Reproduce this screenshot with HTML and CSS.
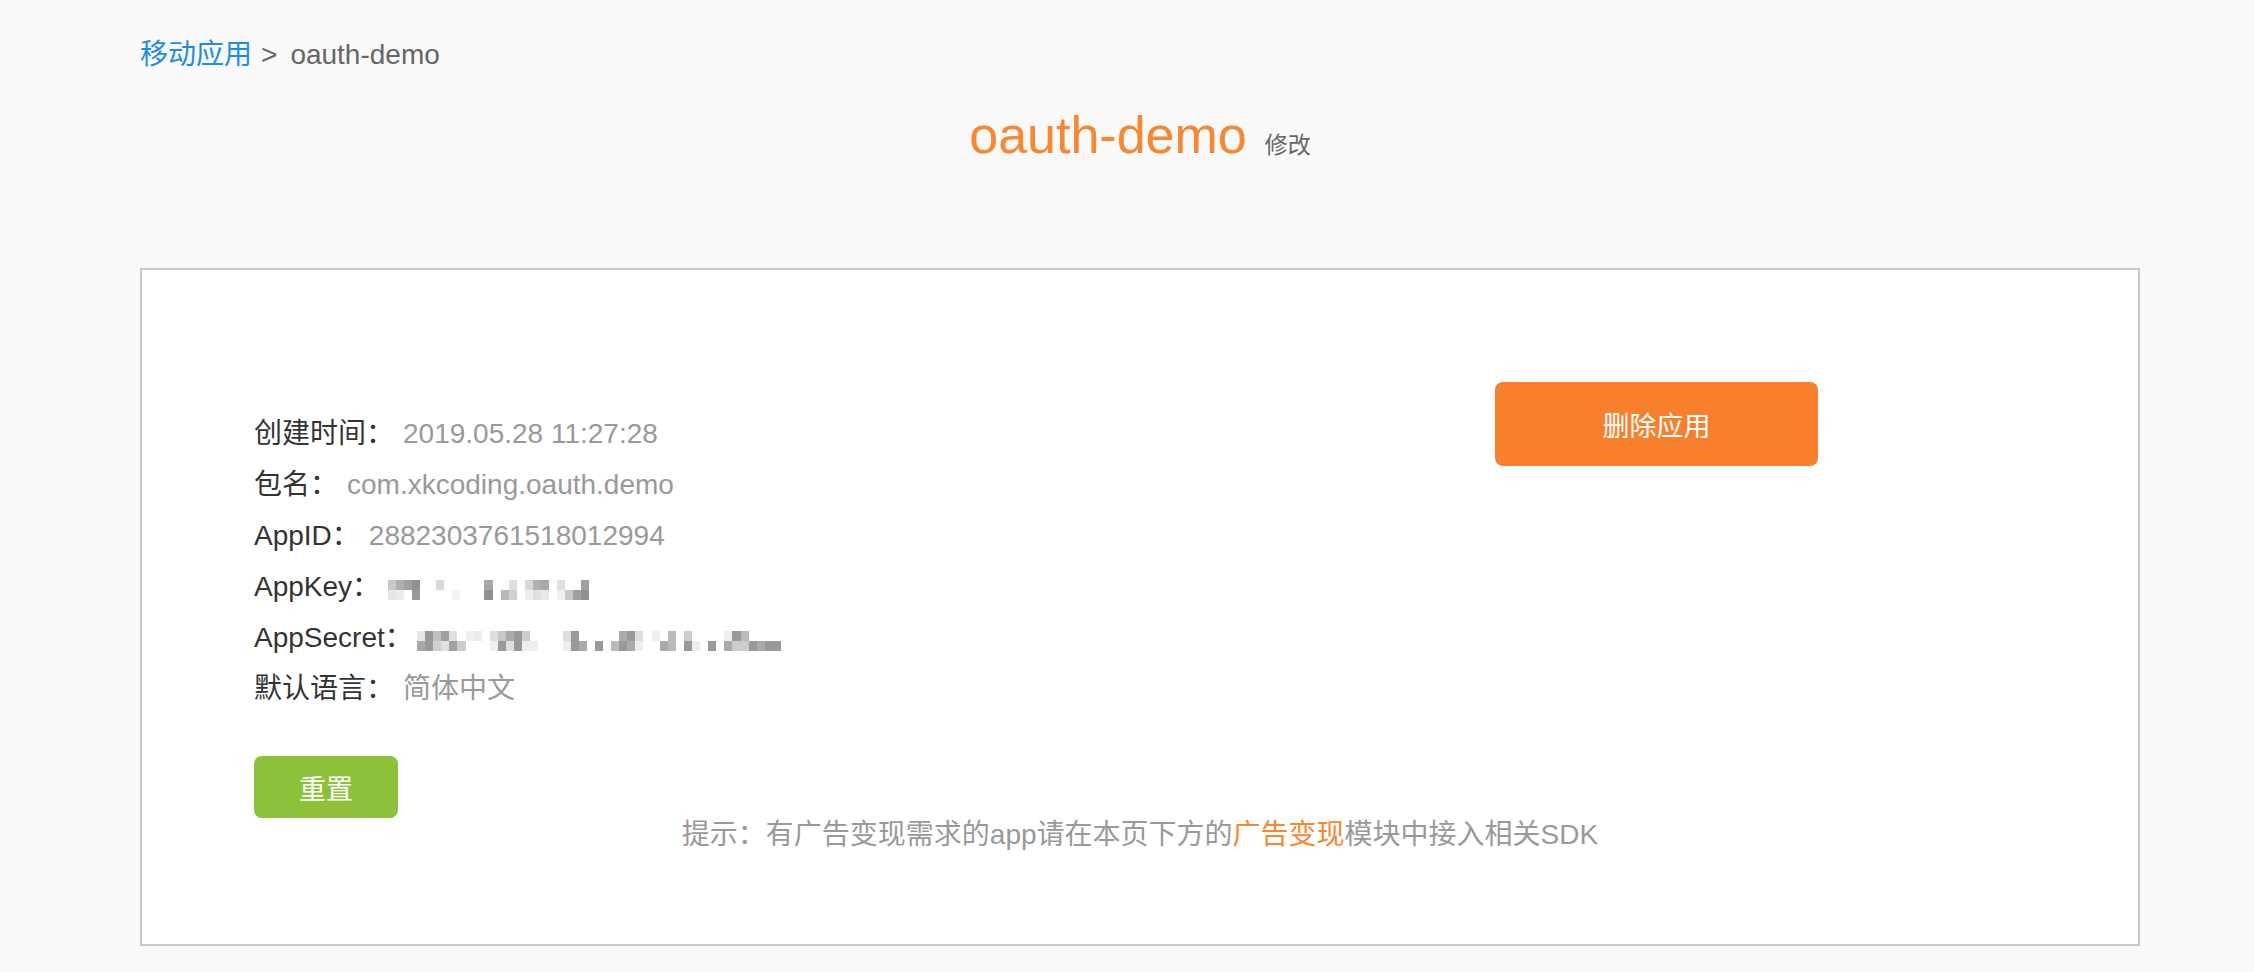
FILE: index.html
```html
<!DOCTYPE html>
<html lang="zh-CN">
<head>
<meta charset="utf-8">
<title>oauth-demo</title>
<link rel="stylesheet" href="styles.css">
</head>
<body>
<div class="page">
  <div class="crumb"><a class="crumb-link">移动应用</a><span class="crumb-sep">&gt;</span><span class="crumb-cur">oauth-demo</span></div>
  <div class="title"><span class="title-name">oauth-demo</span><a class="title-edit">修改</a></div>
  <div class="box">
    <div class="top">
      <ul class="info">
        <li><span class="lbl">创建时间：</span><span class="val">2019.05.28 11:27:28</span></li>
        <li><span class="lbl">包名：</span><span class="val">com.xkcoding.oauth.demo</span></li>
        <li><span class="lbl">AppID：</span><span class="val">2882303761518012994</span></li>
        <li><span class="lbl">AppKey：</span><span class="val">
          <svg class="mosaic key" viewBox="0 0 25 2" preserveAspectRatio="none" shape-rendering="crispEdges">
            <rect x="0" y="0" width="1" height="1" fill="#c8c8c8"/><rect x="0" y="1" width="1" height="1" fill="#e6e6e6"/>
            <rect x="1" y="0" width="1" height="1" fill="#b0b0b0"/><rect x="1" y="1" width="1" height="1" fill="#ececec"/>
            <rect x="2" y="0" width="1" height="1" fill="#a0a0a0"/>
            <rect x="3" y="0" width="1" height="1" fill="#909090"/><rect x="3" y="1" width="1" height="1" fill="#989898"/>
            <rect x="6" y="0" width="1" height="1" fill="#d8d8d8"/>
            <rect x="8" y="1" width="1" height="1" fill="#f2f2f2"/>
            <rect x="12" y="0" width="1" height="1" fill="#a8a8a8"/><rect x="12" y="1" width="1" height="1" fill="#909090"/>
            <rect x="14" y="1" width="1" height="1" fill="#b8b8b8"/>
            <rect x="15" y="0" width="1" height="1" fill="#e0e0e0"/><rect x="15" y="1" width="1" height="1" fill="#d0d0d0"/>
            <rect x="17" y="0" width="1" height="1" fill="#d8d8d8"/><rect x="17" y="1" width="1" height="1" fill="#eeeeee"/>
            <rect x="18" y="0" width="1" height="1" fill="#b0b0b0"/><rect x="18" y="1" width="1" height="1" fill="#e0e0e0"/>
            <rect x="19" y="0" width="1" height="1" fill="#a8a8a8"/><rect x="19" y="1" width="1" height="1" fill="#e8e8e8"/>
            <rect x="21" y="0" width="1" height="1" fill="#e0e0e0"/><rect x="21" y="1" width="1" height="1" fill="#f0f0f0"/>
            <rect x="22" y="1" width="1" height="1" fill="#c8c8c8"/>
            <rect x="23" y="1" width="1" height="1" fill="#a0a0a0"/>
            <rect x="24" y="0" width="1" height="1" fill="#a0a0a0"/><rect x="24" y="1" width="1" height="1" fill="#909090"/>
          </svg></span></li>
        <li><span class="lbl">AppSecret：</span><span class="val">
          <svg class="mosaic secret" viewBox="0 0 45 2" preserveAspectRatio="none" shape-rendering="crispEdges">
            <rect x="0" y="0" width="1" height="1" fill="#e8e8e8"/><rect x="0" y="1" width="1" height="1" fill="#a8a8a8"/>
            <rect x="1" y="0" width="1" height="1" fill="#999999"/><rect x="1" y="1" width="1" height="1" fill="#999999"/>
            <rect x="2" y="0" width="1" height="1" fill="#c0c0c0"/><rect x="2" y="1" width="1" height="1" fill="#d0d0d0"/>
            <rect x="3" y="0" width="1" height="1" fill="#a0a0a0"/><rect x="3" y="1" width="1" height="1" fill="#e0e0e0"/>
            <rect x="4" y="0" width="1" height="1" fill="#e0e0e0"/><rect x="4" y="1" width="1" height="1" fill="#a0a0a0"/>
            <rect x="5" y="1" width="1" height="1" fill="#cccccc"/>
            <rect x="6" y="0" width="1" height="1" fill="#f0f0f0"/>
            <rect x="7" y="0" width="1" height="1" fill="#ececec"/>
            <rect x="9" y="0" width="1" height="1" fill="#dddddd"/><rect x="9" y="1" width="1" height="1" fill="#f0f0f0"/>
            <rect x="10" y="0" width="1" height="1" fill="#c8c8c8"/><rect x="10" y="1" width="1" height="1" fill="#999999"/>
            <rect x="11" y="0" width="1" height="1" fill="#aaaaaa"/><rect x="11" y="1" width="1" height="1" fill="#e0e0e0"/>
            <rect x="12" y="0" width="1" height="1" fill="#999999"/><rect x="12" y="1" width="1" height="1" fill="#999999"/>
            <rect x="13" y="0" width="1" height="1" fill="#cccccc"/><rect x="13" y="1" width="1" height="1" fill="#eeeeee"/>
            <rect x="14" y="1" width="1" height="1" fill="#eeeeee"/>
            <rect x="18" y="0" width="1" height="1" fill="#dddddd"/><rect x="18" y="1" width="1" height="1" fill="#eeeeee"/>
            <rect x="19" y="0" width="1" height="1" fill="#999999"/><rect x="19" y="1" width="1" height="1" fill="#999999"/>
            <rect x="20" y="1" width="1" height="1" fill="#aaaaaa"/>
            <rect x="22" y="1" width="1" height="1" fill="#999999"/>
            <rect x="24" y="1" width="1" height="1" fill="#bbbbbb"/>
            <rect x="25" y="0" width="1" height="1" fill="#aaaaaa"/><rect x="25" y="1" width="1" height="1" fill="#999999"/>
            <rect x="26" y="0" width="1" height="1" fill="#999999"/><rect x="26" y="1" width="1" height="1" fill="#aaaaaa"/>
            <rect x="27" y="0" width="1" height="1" fill="#dddddd"/><rect x="27" y="1" width="1" height="1" fill="#eeeeee"/>
            <rect x="29" y="0" width="1" height="1" fill="#f0f0f0"/>
            <rect x="30" y="1" width="1" height="1" fill="#aaaaaa"/>
            <rect x="31" y="0" width="1" height="1" fill="#bbbbbb"/><rect x="31" y="1" width="1" height="1" fill="#bbbbbb"/>
            <rect x="33" y="0" width="1" height="1" fill="#cccccc"/><rect x="33" y="1" width="1" height="1" fill="#999999"/>
            <rect x="34" y="1" width="1" height="1" fill="#eeeeee"/>
            <rect x="36" y="1" width="1" height="1" fill="#999999"/>
            <rect x="38" y="0" width="1" height="1" fill="#eeeeee"/><rect x="38" y="1" width="1" height="1" fill="#aaaaaa"/>
            <rect x="39" y="0" width="1" height="1" fill="#999999"/><rect x="39" y="1" width="1" height="1" fill="#cccccc"/>
            <rect x="40" y="0" width="1" height="1" fill="#bbbbbb"/><rect x="40" y="1" width="1" height="1" fill="#cccccc"/>
            <rect x="41" y="1" width="1" height="1" fill="#999999"/>
            <rect x="42" y="1" width="1" height="1" fill="#aaaaaa"/>
            <rect x="43" y="1" width="2" height="1" fill="#999999"/>
          </svg></span></li>
        <li><span class="lbl">默认语言：</span><span class="val">简体中文</span></li>
      </ul>
      <button class="btn btn-del">删除应用</button>
    </div>
    <button class="btn btn-reset">重置</button>
    <p class="hint">提示：有广告变现需求的app请在本页下方的<a class="hint-link">广告变现</a>模块中接入相关SDK</p>
  </div>
</div>
</body>
</html>
```

FILE: styles.css
```css
* { box-sizing: border-box; }
html, body {
  margin: 0;
  padding: 0;
  background: #f9f9f9;
}
body {
  font-family: "Liberation Sans", Arial, "Noto Sans CJK SC", sans-serif;
  color: #333;
}
.page {
  width: 2000px;
  margin-left: 140px;
  padding-top: 35px;
}
.crumb {
  font-size: 28px;
  line-height: 40px;
  height: 40px;
  color: #666;
}
.crumb-link { color: #1e8de0; }
.crumb-sep { margin: 0 13px 0 9px; }
.crumb-cur { color: #666; }
.title {
  margin-top: 30px;
  text-align: center;
  line-height: 60px;
  height: 60px;
  white-space: nowrap;
}
.title-name {
  font-size: 52px;
  color: #f78731;
}
.title-edit {
  font-size: 23px;
  color: #666;
  margin-left: 18px;
}
.box {
  margin-top: 103px;
  width: 2000px;
  height: 678px;
  background: #fff;
  border: 2px solid #c9c9c9;
  padding: 112px 112px 0 112px;
}
.top {
  display: flex;
  align-items: flex-start;
}
.info {
  list-style: none;
  margin: 26px 0 0 0;
  padding: 0;
  flex: 0 0 1241px;
  font-size: 28px;
  line-height: 51px;
}
.info li {
  height: 51px;
  white-space: nowrap;
  display: flex;
  align-items: center;
}
.lbl { color: #333; }
.val {
  color: #999;
  margin-left: 9px;
  display: inline-flex;
  align-items: center;
}
.mosaic { display: block; margin-top: 6px; }
.mosaic.key { width: 201px; height: 20px; margin-left: -1px; }
.mosaic.secret { width: 364px; height: 20px; margin-left: -5px; }
.btn {
  border: none;
  border-radius: 8px;
  color: #fff;
  font-family: "Liberation Sans", Arial, "Noto Sans CJK SC", sans-serif;
  font-size: 27px;
  cursor: pointer;
  padding: 0;
}
.btn-del {
  width: 323px;
  height: 84px;
  background: #f87f2b;
}
.btn-reset {
  display: block;
  margin-top: 42px;
  width: 144px;
  height: 62px;
  background: #8dc13a;
}
.hint {
  margin: 0;
  text-align: center;
  font-size: 28px;
  line-height: 34px;
  color: #999;
}
.hint-link { color: #f78731; }
```
